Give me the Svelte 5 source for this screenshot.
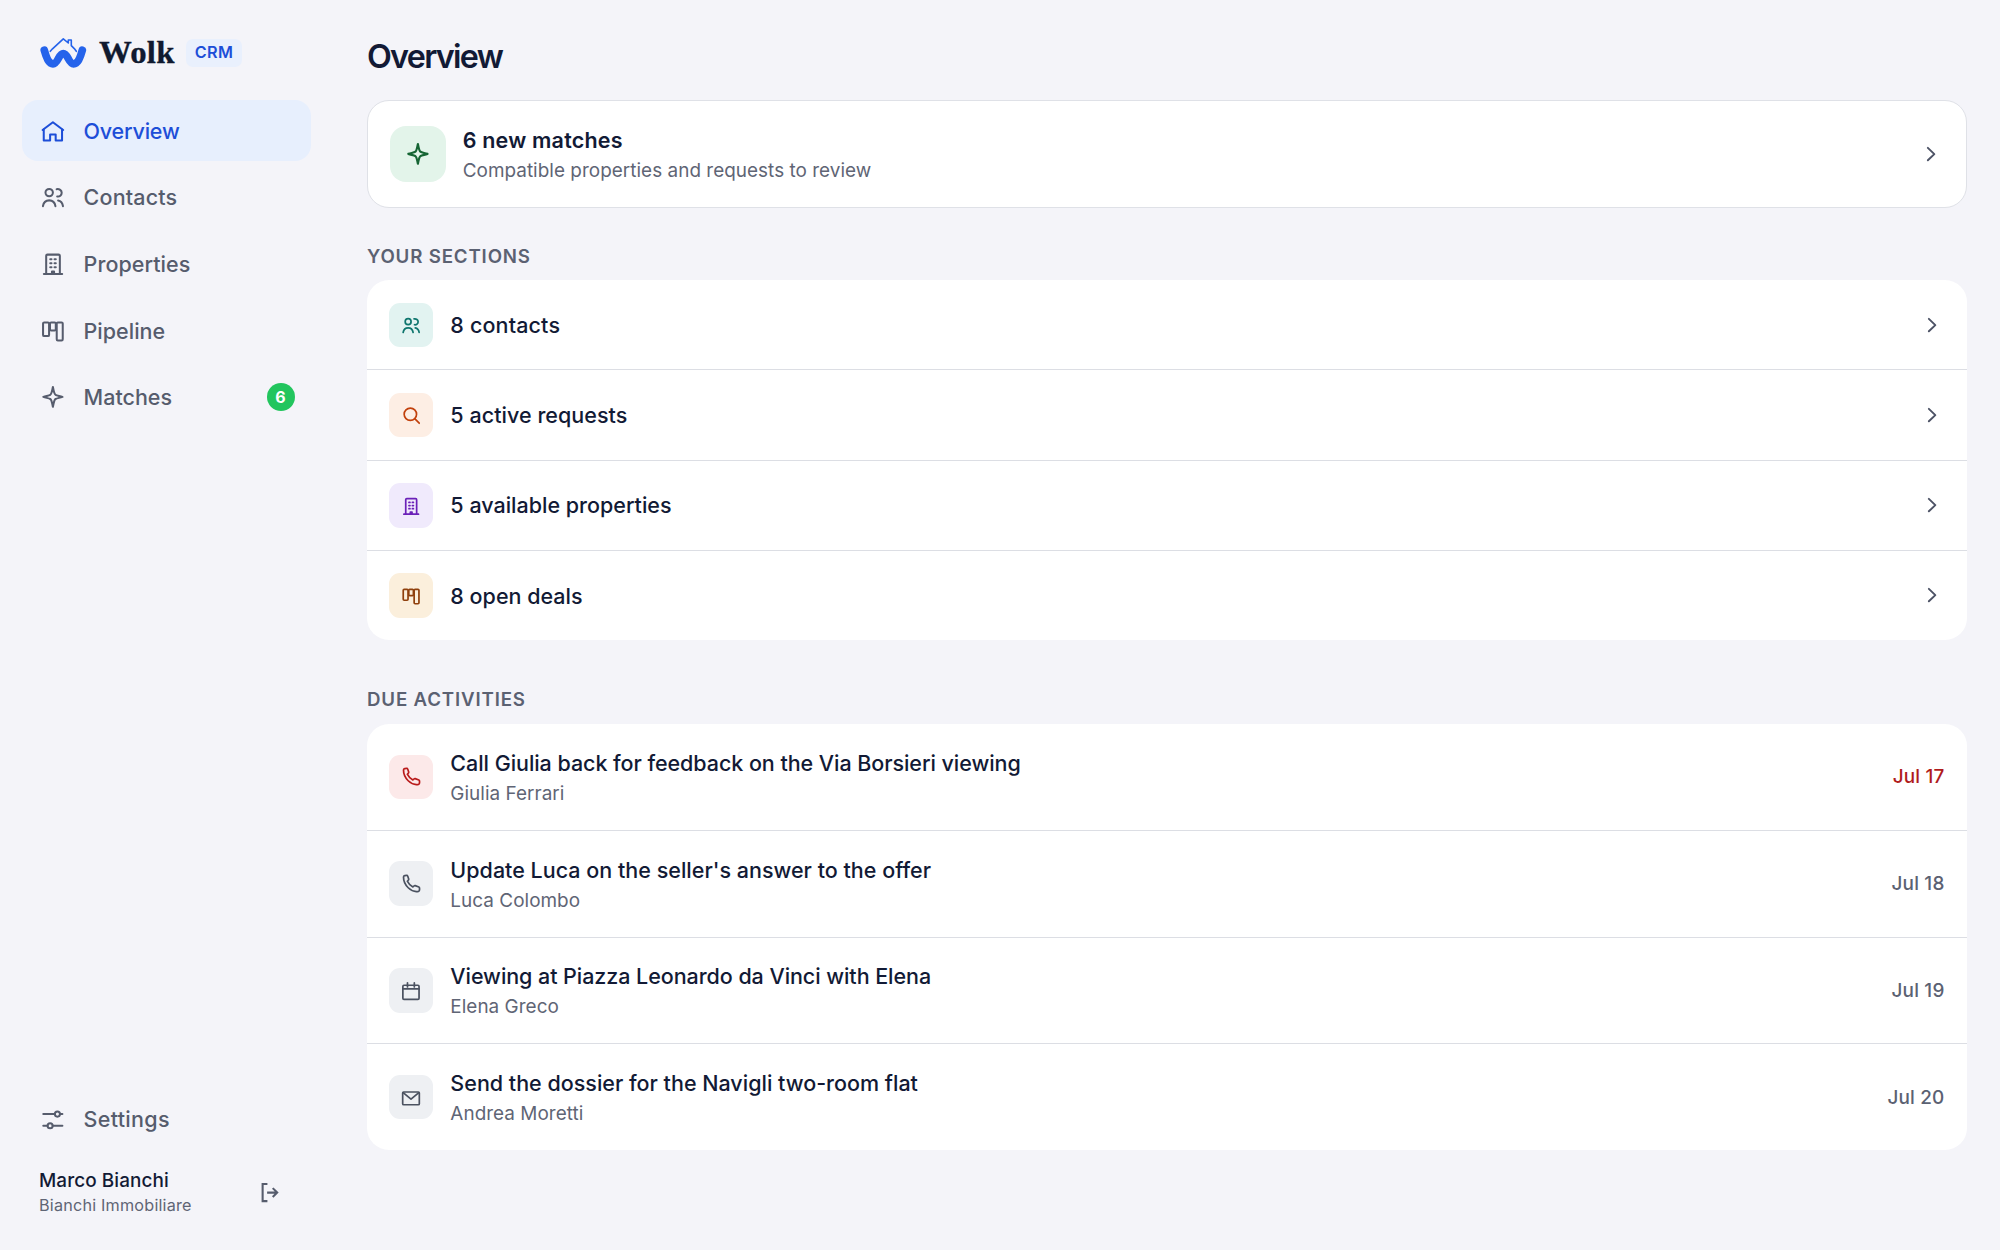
<script>
  const nav = [
    { label: 'Overview', icon: 'home', active: true, ls: -0.2 },
    { label: 'Contacts', icon: 'contacts', ls: 0.15 },
    { label: 'Properties', icon: 'building', ls: 0.06 },
    { label: 'Pipeline', icon: 'pipeline', ls: 0 },
    { label: 'Matches', icon: 'sparkle', count: 6, ls: 0 },
  ];

  const sections = [
    { label: '8 contacts', icon: 'contacts', tone: 'teal', ls: 0.14 },
    { label: '5 active requests', icon: 'search', tone: 'orange', ls: 0.04 },
    { label: '5 available properties', icon: 'building', tone: 'purple', ls: 0 },
    { label: '8 open deals', icon: 'pipeline', tone: 'amber', ls: 0 },
  ];

  const activities = [
    { title: 'Call Giulia back for feedback on the Via Borsieri viewing', who: 'Giulia Ferrari', date: 'Jul 17', icon: 'phone', tone: 'red', late: true, ls: -0.055 },
    { title: "Update Luca on the seller's answer to the offer", who: 'Luca Colombo', date: 'Jul 18', icon: 'phone', tone: 'gray', ls: 0.01 },
    { title: 'Viewing at Piazza Leonardo da Vinci with Elena', who: 'Elena Greco', date: 'Jul 19', icon: 'calendar', tone: 'gray', ls: -0.06 },
    { title: 'Send the dossier for the Navigli two-room flat', who: 'Andrea Moretti', date: 'Jul 20', icon: 'mail', tone: 'gray', ls: 0 },
  ];
</script>

{#snippet icon(name)}
  <svg class="icon" viewBox="0 0 24 24" aria-hidden="true">
    {#if name === 'home'}
      <path d="M3.100 11.200 12 4.500l8.900 6.700" />
      <path d="M4.100 10.700v9.500h5.500v-5h4.800v5h5.500v-9.500" />
    {:else if name === 'contacts'}
      <circle cx="8.800" cy="8.300" r="3.200" />
      <path d="M3.400 20c.5-3.100 2.700-5 5.400-5s4.900 1.900 5.400 5" />
      <path d="M15.200 5.300c2.400-.4 4.400 1 4.400 3.100s-1.800 3.600-3.900 3.200" />
      <path d="M16.500 15.100c2.400.4 3.800 2.200 4.200 4.900" />
    {:else if name === 'building'}
      <path d="M6.200 20.500V5.100c0-.7.4-1.100 1.100-1.100h9.600c.7 0 1.100.4 1.100 1.100v15.400" />
      <path d="M4.200 20.700h15.800" />
      <path d="M9.700 8h1.100M13.400 8h1.100M9.700 11.400h1.100M13.400 11.400h1.100M9.700 14.800h1.100M13.400 14.800h1.100" />
      <path d="M11.200 20.500v-2h1.800v2" />
    {:else if name === 'pipeline'}
      <rect x="3.500" y="4.700" width="5.200" height="11.800" rx="1" />
      <rect x="9.500" y="4.700" width="5" height="6.900" rx="1" />
      <rect x="15.300" y="4.700" width="5.200" height="15.600" rx="1" />
    {:else if name === 'sparkle'}
      <path d="M12 3.500c.7 3.800 1.500 6.300 2.300 6.700 1 .5 3 .9 6 1.800-3 .9-5 1.300-6 1.800-.8.4-1.600 2.900-2.300 6.700-.7-3.800-1.500-6.300-2.300-6.700-1-.5-3-.9-6-1.800 3-.9 5-1.300 6-1.800.8-.4 1.600-2.900 2.300-6.700z" />
    {:else if name === 'search'}
      <circle cx="11.200" cy="11.100" r="6.700" />
      <path d="m16.200 16.200 4.600 4.600" />
    {:else if name === 'phone'}
      <path d="M5 2.900 7.300 2.600c.5 0 .9.200 1 .6l1.100 3.300c.1.400 0 .8-.3 1.100L7.900 8.900c1.300 2.700 3.300 4.800 6 6.200l1.400-1.200c.3-.3.700-.3 1.100-.2l4 1.500c.5.200.7.500.7 1v2.200c0 .7-.4 1.200-1.100 1.400C12 21.500 3.700 13 3.800 4.400c0-.8.5-1.400 1.200-1.500z" />
    {:else if name === 'calendar'}
      <rect x="3.100" y="5.700" width="17.500" height="15.300" rx="1.200" />
      <path d="M3.100 9.700h17.500M8.100 3v4.500M15.500 3v4.500" />
    {:else if name === 'mail'}
      <rect x="2.900" y="5.400" width="18" height="13.800" rx="1.200" />
      <path d="m3.400 6 8.500 7.200 8.500-7.200" />
    {:else if name === 'sliders'}
      <path d="M3.700 7h10M18.100 7h2.100M3.700 17h3.700M11.800 17h8.400" />
      <circle cx="15.900" cy="7" r="2.200" />
      <circle cx="9.600" cy="17" r="2.200" />
    {:else if name === 'logout'}
      <path d="M10 3.900H5.400v16.400H10M9.700 12.100h9.600M15.100 7.800l4.300 4.300-4.300 4.300" />
    {:else if name === 'chevron'}
      <path d="m8.500 5.300 7 6.700-7 6.700" />
    {/if}
  </svg>
{/snippet}

<div class="app">
  <aside class="sidebar">
    <div class="brand">
      <svg class="logo" viewBox="40 36 47 33" aria-hidden="true">
        <path class="wave" d="M44.300 50.300c2.200 8 4.600 13.500 8.700 13.500 5 0 5.700-10.300 10.300-10.300s5.300 10.300 10.300 10.300c4.100 0 6.500-5.500 8.700-13.500" />
        <path class="roof" d="M50.300 51.300l2.200-2.500 10.800-10 5 4.200v-3h3v5.600l3 3 2 2.700" />
      </svg>
      <span class="word">Wolk</span>
      <span class="tag">CRM</span>
    </div>

    <nav class="nav">
      {#each nav as item}
        <a class="item" class:active={item.active}>
          {@render icon(item.icon)}
          <span style="letter-spacing: {item.ls}px">{item.label}</span>
          {#if item.count}<b class="count">{item.count}</b>{/if}
        </a>
      {/each}
    </nav>

    <div class="foot">
      <a class="item">
        {@render icon('sliders')}
        <span class="settings">Settings</span>
      </a>
      <div class="user">
        <div>
          <div class="name">Marco Bianchi</div>
          <div class="org">Bianchi Immobiliare</div>
        </div>
        <button class="logout" aria-label="Log out">{@render icon('logout')}</button>
      </div>
    </div>
  </aside>

  <main class="main">
    <h1>Overview</h1>

    <section class="hero">
      <span class="tile large green">{@render icon('sparkle')}</span>
      <div class="text">
        <div class="title strong">6 new matches</div>
        <div class="sub">Compatible properties and requests to review</div>
      </div>
      <span class="chevron">{@render icon('chevron')}</span>
    </section>

    <h2>YOUR SECTIONS</h2>
    <section class="list">
      {#each sections as s}
        <div class="row short">
          <span class="tile {s.tone}">{@render icon(s.icon)}</span>
          <div class="text title" style="letter-spacing: {s.ls}px">{s.label}</div>
          <span class="chevron">{@render icon('chevron')}</span>
        </div>
      {/each}
    </section>

    <h2 class="second">DUE ACTIVITIES</h2>
    <section class="list">
      {#each activities as a}
        <div class="row tall">
          <span class="tile {a.tone}">{@render icon(a.icon)}</span>
          <div class="text">
            <div class="title" style="letter-spacing: {a.ls}px">{a.title}</div>
            <div class="sub">{a.who}</div>
          </div>
          <span class="date" class:late={a.late}>{a.date}</span>
        </div>
      {/each}
    </section>
  </main>
</div>

<style>
  :global(body) {
    background: #f4f4f9;
  }
  .app {
    box-sizing: border-box;
    display: flex;
    width: 100%;
    height: 1250px;
    overflow: hidden;
    font-family: Inter, 'Liberation Sans', sans-serif;
    color: #121a35;
    background: #f4f4f9;
  }
  .icon {
    display: block;
    flex: none;
    width: 27.8px;
    height: 27.8px;
    fill: none;
    stroke: currentColor;
    stroke-width: 1.75;
    stroke-linecap: round;
    stroke-linejoin: round;
  }

  .sidebar {
    box-sizing: border-box;
    flex: none;
    display: flex;
    flex-direction: column;
    width: 333.3px;
    padding: 36px 22px 0;
  }
  .brand {
    display: flex;
    align-items: center;
    height: 33px;
    padding-left: 18px;
    margin-bottom: 31px;
  }
  .logo {
    width: 47px;
    height: 33px;
    fill: none;
    stroke: #2563eb;
    stroke-linecap: round;
    stroke-linejoin: round;
  }
  .wave {
    stroke-width: 7.7;
  }
  .roof {
    stroke-width: 1.6;
  }
  .word {
    width: 77px;
    margin-left: 12px;
    padding-top: 2px;
    font: 700 30.5px/33px 'Liberation Serif', serif;
    letter-spacing: 0.2px;
    color: #101a30;
    -webkit-text-stroke: 0.3px #101a30;
    transform: scaleX(1.075);
    transform-origin: left center;
  }
  .tag {
    box-sizing: border-box;
    width: 56px;
    height: 28px;
    margin-left: 10px;
    border-radius: 7px;
    background: #e9f0fd;
    color: #1d4ed8;
    font-size: 16.2px;
    font-weight: 600;
    line-height: 27px;
    letter-spacing: 0.3px;
    text-align: center;
  }
  .nav {
    display: flex;
    flex-direction: column;
    gap: 5.6px;
  }
  .item {
    box-sizing: border-box;
    display: flex;
    align-items: center;
    gap: 17.2px;
    height: 61.1px;
    padding: 0 16.8px 0 16.6px;
    border-radius: 16px;
    color: #565c6d;
    font-size: 21.5px;
    font-weight: 500;
  }
  .item.active {
    background: #e7effd;
    color: #1d4ed8;
  }
  .settings {
    letter-spacing: 0.3px;
  }
  .count {
    width: 28px;
    height: 28px;
    margin-left: auto;
    border-radius: 50%;
    background: #22c55e;
    color: #fff;
    font-size: 16px;
    font-weight: 700;
    line-height: 28px;
    text-align: center;
  }
  .foot {
    margin-top: auto;
    padding-bottom: 32px;
  }
  .user {
    display: flex;
    align-items: center;
    justify-content: space-between;
    height: 52px;
    padding: 0 29px 0 17px;
    margin-top: 16px;
  }
  .name {
    font-size: 18.9px;
    font-weight: 500;
    line-height: 26px;
    letter-spacing: 0.1px;
  }
  .org {
    color: #5f6575;
    font-size: 16.2px;
    line-height: 23px;
    letter-spacing: 0.2px;
  }
  .logout {
    padding: 0;
    border: 0;
    background: none;
    color: #565c6d;
  }
  .logout :global(svg) {
    width: 25px;
    height: 25px;
    stroke-width: 2;
    stroke-linecap: butt;
    stroke-linejoin: miter;
  }

  .main {
    flex: 1;
    min-width: 0;
    padding: 37px 33.3px 0;
  }
  h1 {
    margin: 0 0 23px;
    font-size: 32.3px;
    font-weight: 600;
    line-height: 40px;
    letter-spacing: -1.7px;
    text-indent: 0.4px;
  }
  h2 {
    margin: 36px 0 12px;
    color: #5b6172;
    font-size: 18.7px;
    font-weight: 600;
    line-height: 25px;
    letter-spacing: 0.83px;
    text-indent: 0.4px;
  }
  h2 + .list {
    margin-top: -1px;
  }
  h2.second {
    margin: 47.2px 0 12.8px;
  }
  .hero {
    box-sizing: border-box;
    display: flex;
    align-items: center;
    gap: 16.7px;
    height: 108px;
    padding: 0 23.2px 0 22.8px;
    border: 1px solid #dfe1e7;
    border-radius: 22px;
    background: #fff;
  }
  .hero .text,
  .tall .text {
    padding-top: 2px;
  }
  .list {
    overflow: hidden;
    border-radius: 22px;
    background: #fff;
  }
  .row {
    box-sizing: border-box;
    display: flex;
    align-items: center;
    gap: 17.2px;
    padding: 0 22.2px;
    border-bottom: 1px solid #dcdee4;
  }
  .row:last-child {
    border-bottom: 0;
  }
  .row.short {
    height: 90.4px;
    padding-right: 23.2px;
  }
  .row.short:last-child {
    height: 88.8px;
  }
  .row.tall {
    height: 106.8px;
  }
  .row.tall:last-child {
    height: 105.6px;
  }
  .tile {
    box-sizing: border-box;
    flex: none;
    display: grid;
    place-items: center;
    width: 44.4px;
    height: 44.4px;
    padding: 1px 0 0 1.2px;
    border-radius: 11px;
  }
  .tile :global(svg) {
    width: 22.2px;
    height: 22.2px;
    stroke-width: 1.85;
  }
  .tile.large {
    width: 55.6px;
    height: 55.6px;
    padding: 0;
    border-radius: 16px;
  }
  .tile.large :global(svg) {
    width: 27.8px;
    height: 27.8px;
  }
  .green { background: #e3f4ea; color: #166534; }
  .teal { background: #e2f3f1; color: #0f766e; }
  .orange { background: #fdeee4; color: #c2410c; }
  .purple { background: #f0eafc; color: #6b21b8; }
  .amber { background: #fbefdc; color: #8f400d; }
  .red { background: #fce9e9; color: #b91c1c; }
  .gray { background: #eef0f3; color: #4b5260; }

  .text {
    flex: 1;
    min-width: 0;
  }
  .title {
    font-size: 21.5px;
    font-weight: 500;
    line-height: 31px;
  }
  .short .title {
    padding-top: 1px;
  }
  .strong {
    font-weight: 600;
    letter-spacing: 0.2px;
  }
  .sub {
    margin-top: 1px;
    color: #5f6575;
    font-size: 18.9px;
    line-height: 28px;
    letter-spacing: 0.04px;
  }
  .chevron {
    color: #4d5366;
  }
  .chevron :global(svg) {
    width: 22.2px;
    height: 22.2px;
    stroke-width: 2.1;
  }
  .date {
    color: #5b6172;
    font-size: 18.9px;
    font-weight: 500;
    letter-spacing: 0.2px;
  }
  .date.late {
    color: #b01c1c;
  }
</style>
